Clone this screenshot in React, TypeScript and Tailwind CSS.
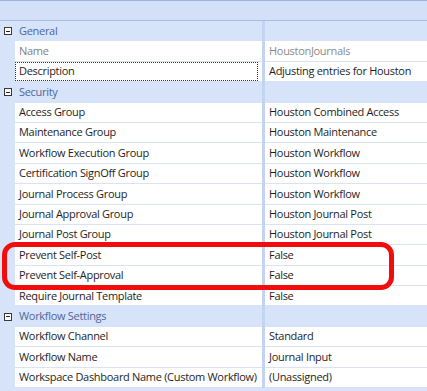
import React from "react";

type Row =
  | { kind: "cat"; label: string }
  | { kind: "prop"; name: string; value: string; muted?: boolean; focus?: boolean };

const rows: Row[] = [
  { kind: "cat", label: "General" },
  { kind: "prop", name: "Name", value: "HoustonJournals", muted: true },
  { kind: "prop", name: "Description", value: "Adjusting entries for Houston", focus: true },
  { kind: "cat", label: "Security" },
  { kind: "prop", name: "Access Group", value: "Houston Combined Access" },
  { kind: "prop", name: "Maintenance Group", value: "Houston Maintenance" },
  { kind: "prop", name: "Workflow Execution Group", value: "Houston Workflow" },
  { kind: "prop", name: "Certification SignOff Group", value: "Houston Workflow" },
  { kind: "prop", name: "Journal Process Group", value: "Houston Workflow" },
  { kind: "prop", name: "Journal Approval Group", value: "Houston Journal Post" },
  { kind: "prop", name: "Journal Post Group", value: "Houston Journal Post" },
  { kind: "prop", name: "Prevent Self-Post", value: "False" },
  { kind: "prop", name: "Prevent Self-Approval", value: "False" },
  { kind: "prop", name: "Require Journal Template", value: "False" },
  { kind: "cat", label: "Workflow Settings" },
  { kind: "prop", name: "Workflow Channel", value: "Standard" },
  { kind: "prop", name: "Workflow Name", value: "Journal Input" },
  { kind: "prop", name: "Workspace Dashboard Name (Custom Workflow)", value: "(Unassigned)" },
];

function Collapse() {
  return (
    <div className="relative w-[8px] h-[8px] border border-[#3a3a3a] bg-white">
      <div className="absolute left-[1px] right-[1px] top-[2.5px] h-[1px] bg-[#222]" />
    </div>
  );
}

export default function App() {
  return (
    <div
      className="relative w-[427px] h-[391px] overflow-hidden bg-[#d7e3f8] text-[11px] tracking-[-0.3px]"
      style={{ fontFamily: '"Open Sans", "Noto Sans", sans-serif' }}
    >
      <div className="h-[21px] border-t border-[#9cb1df] border-b border-b-[#a9bce5] bg-[#d4e0f7]" />
      <div className="flex flex-col">
        {rows.map((r, i) =>
          r.kind === "cat" ? (
            <div key={i} className="flex h-[20.4px] items-center">
              <div className="w-[15px] h-full flex items-center justify-center pl-[1px]">
                <Collapse />
              </div>
              <div className="w-[247px] h-full flex items-center pl-[4px] text-[#50669a] whitespace-nowrap">
                {r.label}
              </div>
              <div className="w-[3px] h-full bg-[#c4d3ef]" />
              <div className="flex-1 h-full" />
            </div>
          ) : (
            <div key={i} className="flex h-[20.4px]">
              <div className="w-[15px] h-full" />
              <div
                className={
                  "w-[247px] h-full bg-white border-b border-[#dae3f4] flex items-center pl-[4px] whitespace-nowrap overflow-hidden " +
                  (r.muted ? "text-[#7f7f7f]" : "text-[#1e1e1e]")
                }
              >
                {r.focus ? (
                  <div className="w-full h-full -ml-[4px] pl-[3px] flex items-center border border-dotted border-[#333]">
                    {r.name}
                  </div>
                ) : (
                  r.name
                )}
              </div>
              <div className="w-[3px] h-full bg-[#c4d3ef]" />
              <div
                className={
                  "flex-1 h-full bg-white border-b border-[#dae3f4] flex items-center pl-[4px] whitespace-nowrap overflow-hidden " +
                  (r.muted ? "text-[#8a8a8a]" : "text-[#1e1e1e]")
                }
              >
                {r.value}
              </div>
            </div>
          )
        )}
      </div>
      <div className="absolute left-[2px] top-[242px] w-[392px] h-[48px] border-[5px] border-[#f20d0d] rounded-[13px]" />
    </div>
  );
}
